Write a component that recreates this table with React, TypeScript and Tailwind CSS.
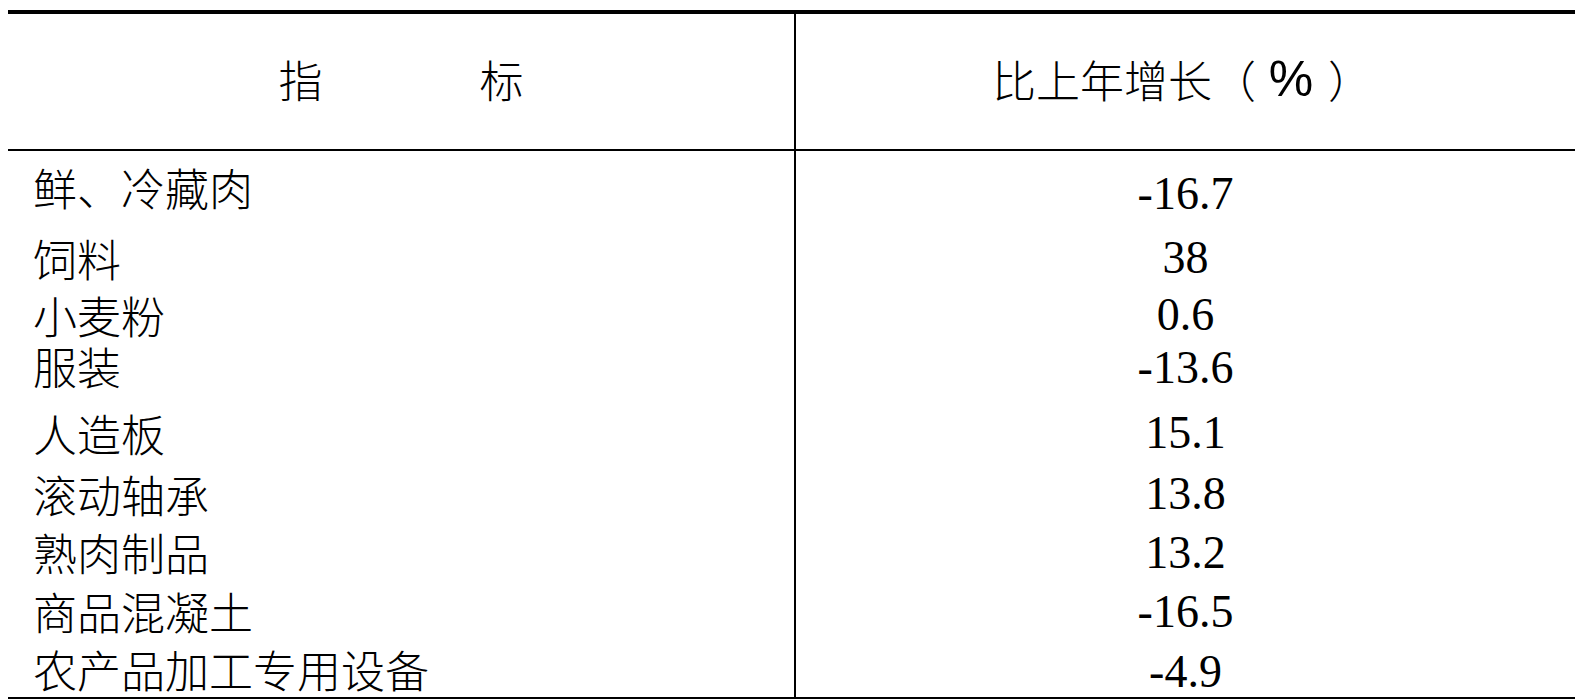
const CJK = "font-['Noto_Sans_CJK_SC',sans-serif]"
const NUM = "font-['Liberation_Serif','Noto_Sans_CJK_SC',serif]"

// h: row pitch, shift: nudge of the name relative to the number
const rows = [
  { name: '鲜、冷藏肉', value: '-16.7', h: 'h-[64px]', shift: '-translate-y-[7px]' },
  { name: '饲料', value: '38', h: 'h-[57px]', shift: '' },
  { name: '小麦粉', value: '0.6', h: 'h-[53px]', shift: '' },
  { name: '服装', value: '-13.6', h: 'h-[65px]', shift: '-translate-y-[2px]' },
  { name: '人造板', value: '15.1', h: 'h-[61px]', shift: '' },
  { name: '滚动轴承', value: '13.8', h: 'h-[59px]', shift: '' },
  { name: '熟肉制品', value: '13.2', h: 'h-[59px]', shift: '-translate-y-[1px]' },
  { name: '商品混凝土', value: '-16.5', h: 'h-[60px]', shift: '-translate-y-[1px]' },
  { name: '农产品加工专用设备', value: '-4.9', h: 'h-[48px]', shift: '-translate-y-[3px]' },
]

export default function App() {
  return (
    <div className="w-[1579px] h-[699px] bg-white text-black overflow-hidden pt-[10px]">
      <div className="ml-[8px] w-[1567px] border-t-4 border-b-2 border-black">
        <div className="grid grid-cols-[788px_1fr] h-[137px] border-b-2 border-black">
          <div className={`flex items-center justify-center gap-[157px] pb-[6px] border-r-2 border-black text-[44px] font-light leading-none ${CJK}`}>
            <span>指</span>
            <span>标</span>
          </div>
          <div className={`flex items-center justify-center pb-[6px] pr-[5px] text-[44px] font-light leading-none ${CJK}`}>
            <span>比上年增长</span>
            <span className="inline-block w-[44px] text-center">（</span>
            <span className="inline-block w-[70px] text-center text-[50px] font-['Liberation_Sans',sans-serif]">%</span>
            <span className="inline-block w-[48px] text-center">）</span>
          </div>
        </div>
        <div className="grid grid-cols-[788px_1fr]">
          <div className="border-r-2 border-black pt-[20px]">
            {rows.map((r) => (
              <div key={r.name} className={r.h}>
                <div
                  className={`flex items-center h-[46px] pl-[25px] text-[44px] font-light leading-none ${CJK} ${r.shift}`}
                >
                  {r.name}
                </div>
              </div>
            ))}
          </div>
          <div className="pt-[20px]">
            {rows.map((r) => (
              <div key={r.name} className={r.h}>
                <div className={`flex items-center justify-center h-[46px] text-[46px] leading-none ${NUM}`}>
                  {r.value}
                </div>
              </div>
            ))}
          </div>
        </div>
      </div>
    </div>
  )
}
